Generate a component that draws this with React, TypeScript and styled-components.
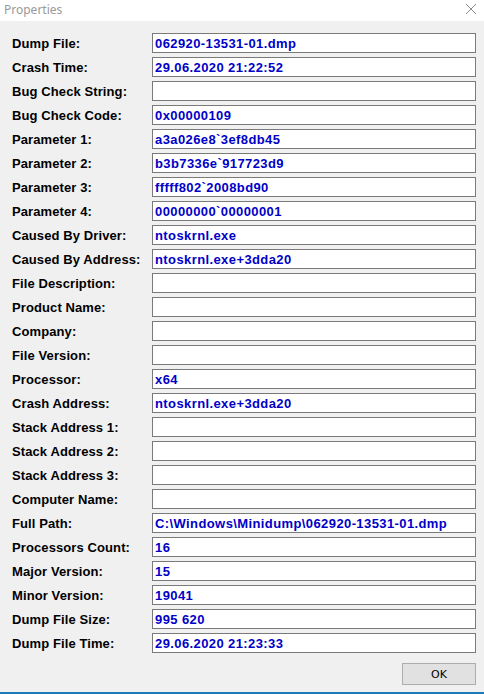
import { Fragment } from 'react';
import styled, { createGlobalStyle } from 'styled-components';

const GlobalStyle = createGlobalStyle`
  html, body {
    margin: 0;
    padding: 0;
    background: #ffffff;
  }
`;

const Window = styled.div`
  width: 484px;
  height: 694px;
  display: flex;
  flex-direction: column;
  background: #f0f0f0;
  box-sizing: border-box;
  border-bottom: 2px solid #1a7bb8;
  font-family: 'Liberation Sans', Arial, sans-serif;
`;

const TitleBar = styled.div`
  height: 21px;
  background: #ffffff;
  display: flex;
  align-items: center;
  justify-content: space-between;
  padding: 0 4px 0 4px;
  box-sizing: border-box;
`;

const Title = styled.span`
  font-family: 'Noto Sans', 'Open Sans', sans-serif;
  font-size: 12px;
  color: #9a9a9a;
  margin-top: -2px;
`;

const Close = styled.svg`
  width: 12px;
  height: 12px;
  margin-right: 3px;
  margin-top: -3px;
`;

const Body = styled.div`
  flex: 1;
  display: flex;
  flex-direction: column;
  padding: 12px 8px 0 12px;
`;

const Form = styled.div`
  display: grid;
  grid-template-columns: 140px 324px;
  row-gap: 4px;
`;

const Label = styled.div`
  height: 20px;
  display: flex;
  align-items: center;
  font-size: 13px;
  font-weight: bold;
  letter-spacing: 0.1px;
  color: #000000;
  white-space: nowrap;
`;

const Field = styled.div`
  height: 20px;
  box-sizing: border-box;
  border: 1px solid #7a7a7a;
  background: #ffffff;
  display: flex;
  align-items: center;
  padding: 0 2px;
  font-size: 13px;
  font-weight: bold;
  letter-spacing: 0.4px;
  color: #0000c8;
  white-space: nowrap;
  overflow: hidden;
`;

const Footer = styled.div`
  display: flex;
  justify-content: flex-end;
  padding-top: 10px;
`;

const Button = styled.button`
  width: 74px;
  height: 22px;
  background: #e1e1e1;
  border: 1px solid #adadad;
  font-family: 'DejaVu Sans', sans-serif;
  font-size: 11px;
  color: #000000;
  padding: 0;
`;

const rows: [string, string][] = [
  ['Dump File:', '062920-13531-01.dmp'],
  ['Crash Time:', '29.06.2020 21:22:52'],
  ['Bug Check String:', ''],
  ['Bug Check Code:', '0x00000109'],
  ['Parameter 1:', 'a3a026e8`3ef8db45'],
  ['Parameter 2:', 'b3b7336e`917723d9'],
  ['Parameter 3:', 'fffff802`2008bd90'],
  ['Parameter 4:', '00000000`00000001'],
  ['Caused By Driver:', 'ntoskrnl.exe'],
  ['Caused By Address:', 'ntoskrnl.exe+3dda20'],
  ['File Description:', ''],
  ['Product Name:', ''],
  ['Company:', ''],
  ['File Version:', ''],
  ['Processor:', 'x64'],
  ['Crash Address:', 'ntoskrnl.exe+3dda20'],
  ['Stack Address 1:', ''],
  ['Stack Address 2:', ''],
  ['Stack Address 3:', ''],
  ['Computer Name:', ''],
  ['Full Path:', 'C:\\Windows\\Minidump\\062920-13531-01.dmp'],
  ['Processors Count:', '16'],
  ['Major Version:', '15'],
  ['Minor Version:', '19041'],
  ['Dump File Size:', '995 620'],
  ['Dump File Time:', '29.06.2020 21:23:33'],
];

export default function App() {
  return (
    <>
      <GlobalStyle />
      <Window>
        <TitleBar>
          <Title>Properties</Title>
          <Close viewBox="0 0 12 12">
            <path d="M1 1 L11 11 M11 1 L1 11" stroke="#8a8a8a" strokeWidth="1" fill="none" />
          </Close>
        </TitleBar>
        <Body>
          <Form>
            {rows.map(([label, value]) => (
              <Fragment key={label}>
                <Label>{label}</Label>
                <Field>{value}</Field>
              </Fragment>
            ))}
          </Form>
          <Footer>
            <Button>OK</Button>
          </Footer>
        </Body>
      </Window>
    </>
  );
}
